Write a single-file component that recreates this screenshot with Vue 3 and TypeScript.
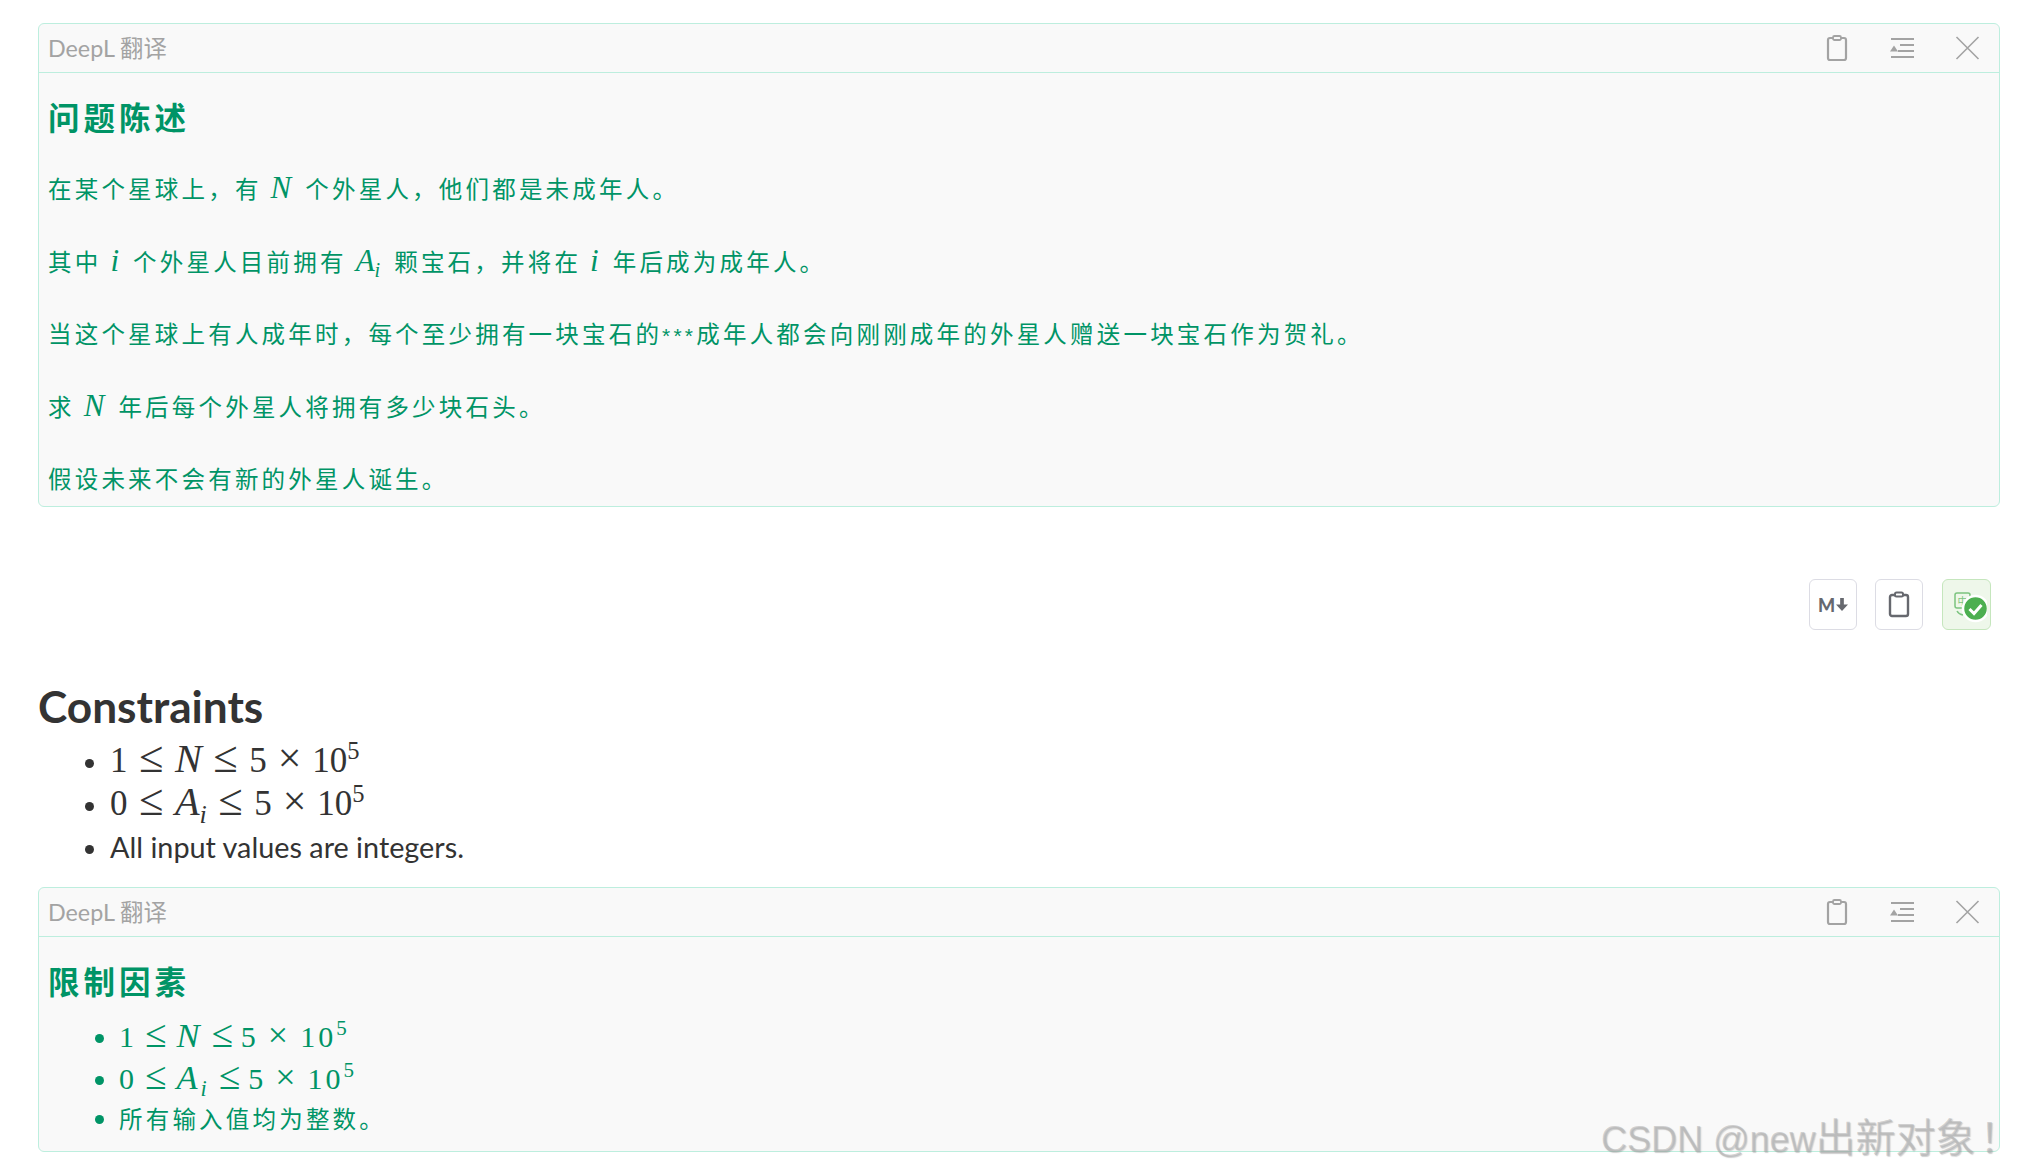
<script setup lang="ts">
type Seg = { k: 't' | 'm' | 'a' | 's'; v: string }
const t = (v: string): Seg => ({ k: 't', v })
const m = (v: string): Seg => ({ k: 'm', v })
const s = (v: string): Seg => ({ k: 's', v })
const a: Seg = { k: 'a', v: 'A' }
const paragraphs: Seg[][] = [
  [t('在某个星球上，有'), m('N'), t('个外星人，他们都是未成年人。')],
  [t('其中'), m('i'), t('个外星人目前拥有'), a, t('颗宝石，并将在'), m('i'), t('年后成为成年人。')],
  [t('当这个星球上有人成年时，每个至少拥有一块宝石的'), s('***'), t('成年人都会向刚刚成年的外星人赠送一块宝石作为贺礼。')],
  [t('求'), m('N'), t('年后每个外星人将拥有多少块石头。')],
  [t('假设未来不会有新的外星人诞生。')],
]
</script>

<template>
  <div class="page">
    <section class="card first">
      <header class="card-head">
        <span class="label">DeepL 翻译</span>
        <div class="tools">
          <svg class="tool" width="24" height="28" viewBox="0 0 24 28"><rect x="3" y="4" width="18" height="22" rx="2" fill="none" stroke="#a3a3a3" stroke-width="2.2"/><rect x="8" y="2" width="8" height="4" rx="1.5" fill="#f9f9f9" stroke="#a3a3a3" stroke-width="1.8"/></svg>
          <svg class="tool" width="26" height="22" viewBox="0 0 26 22"><path d="M2 2h23M11 8h14M9 14h16M2 20h23" stroke="#a3a3a3" stroke-width="2" fill="none"/><path d="M1 14.500h8L5 8.500z" fill="#a3a3a3"/></svg>
          <svg class="tool" width="25" height="24" viewBox="0 0 25 24"><path d="M1.5 1l22 22M23.5 1l-22 22" stroke="#a3a3a3" stroke-width="1.6" fill="none"/></svg>
        </div>
      </header>
      <div class="card-body">
        <h3 class="zh-title">问题陈述</h3>
        <p v-for="(segs, i) in paragraphs" :key="i" class="zh-p">
          <template v-for="(seg, j) in segs" :key="j">
            <span v-if="seg.k === 't'">{{ seg.v }}</span>
            <span v-else-if="seg.k === 's'" class="stars">{{ seg.v }}</span>
            <span v-else-if="seg.k === 'm'" class="mi inline">{{ seg.v }}</span>
            <span v-else class="mi inline">A<sub class="sb">i</sub></span>
          </template>
        </p>
      </div>
    </section>

    <div class="actions">
      <button class="btn"><span class="md">M</span><svg width="12" height="13" viewBox="0 0 13 14"><path d="M4.5 0h4v7H13l-6.500 7L0 7h4.500z" fill="#66686e"/></svg></button>
      <button class="btn">
        <svg width="22" height="27" viewBox="0 0 22 27"><rect x="2" y="4" width="18" height="21" rx="2" fill="none" stroke="#66686e" stroke-width="2.4"/><rect x="7" y="1.500" width="8" height="4" rx="1.500" fill="#fff" stroke="#66686e" stroke-width="2"/></svg>
      </button>
      <button class="btn ok">
        <svg width="40" height="36" viewBox="0 0 40 36">
          <rect x="8" y="6" width="15" height="15" rx="2" fill="none" stroke="#7cc47f" stroke-width="1.500"/>
          <text x="10.500" y="18" font-size="10" fill="#7cc47f" font-family="Noto Sans CJK SC">中</text>
          <path d="M10 24a8 8 0 0 0 6 4" fill="none" stroke="#7cc47f" stroke-width="1.500"/>
          <circle cx="28.500" cy="21.500" r="12.500" fill="#4caf50" stroke="#fff" stroke-width="2.500"/>
          <path d="M22.500 22l4.500 4.500 7.500-8.500" fill="none" stroke="#fff" stroke-width="3"/>
        </svg>
      </button>
    </div>

    <h2 class="en-title">Constraints</h2>
    <ul class="en-list">
      <li class="math-row">
        <span class="n">1</span><span class="rel">≤</span><span class="mi">N</span><span class="rel">≤</span><span class="n">5</span><span class="bin">×</span><span class="n">10<sup class="sp">5</sup></span>
      </li>
      <li class="math-row">
        <span class="n">0</span><span class="rel">≤</span><span class="mi">A<sub class="sb">i</sub></span><span class="rel">≤</span><span class="n">5</span><span class="bin">×</span><span class="n">10<sup class="sp">5</sup></span>
      </li>
      <li class="text-row">All input values are integers.</li>
    </ul>

    <section class="card">
      <header class="card-head">
        <span class="label">DeepL 翻译</span>
        <div class="tools">
          <svg class="tool" width="24" height="28" viewBox="0 0 24 28"><rect x="3" y="4" width="18" height="22" rx="2" fill="none" stroke="#a3a3a3" stroke-width="2.2"/><rect x="8" y="2" width="8" height="4" rx="1.5" fill="#f9f9f9" stroke="#a3a3a3" stroke-width="1.8"/></svg>
          <svg class="tool" width="26" height="22" viewBox="0 0 26 22"><path d="M2 2h23M11 8h14M9 14h16M2 20h23" stroke="#a3a3a3" stroke-width="2" fill="none"/><path d="M1 14.500h8L5 8.500z" fill="#a3a3a3"/></svg>
          <svg class="tool" width="25" height="24" viewBox="0 0 25 24"><path d="M1.5 1l22 22M23.5 1l-22 22" stroke="#a3a3a3" stroke-width="1.6" fill="none"/></svg>
        </div>
      </header>
      <div class="card-body second">
        <h3 class="zh-title">限制因素</h3>
        <ul class="zh-list">
          <li class="zh-math">
            <span class="n">1</span><span class="rel">≤</span><span class="mi">N</span><span class="rel">≤</span><span class="n">5</span><span class="bin">×</span><span class="n">10<sup class="sp">5</sup></span>
          </li>
          <li class="zh-math">
            <span class="n">0</span><span class="rel">≤</span><span class="mi">A<sub class="sb">i</sub></span><span class="rel">≤</span><span class="n">5</span><span class="bin">×</span><span class="n">10<sup class="sp">5</sup></span>
          </li>
          <li>所有输入值均为整数。</li>
        </ul>
      </div>
    </section>

    <div class="watermark">CSDN @new<span class="wm-zh">出新对象<span class="wm-bang">！</span></span></div>
  </div>
</template>

<style scoped>
.page {
  position: relative;
  width: 2020px;
  height: 1174px;
  box-sizing: border-box;
  padding: 23px 20px 0 38px;
  overflow: hidden;
  background: #fff;
  font-family: Lato, "Noto Sans CJK SC", sans-serif;
  color: #333;
}
.card {
  border: 1px solid #bdeede;
  border-radius: 6px;
  background: #f9f9f9;
}
.card-head {
  height: 49px;
  box-sizing: border-box;
  border-bottom: 1px solid #bdeede;
  display: flex;
  align-items: center;
  justify-content: space-between;
  padding: 0 19px 0 9px;
}
.label {
  font-size: 23.3px;
  line-height: 46px;
  color: #a3a3a3;
}
.tools {
  display: flex;
  align-items: center;
  gap: 40px;
}
.tool {
  display: block;
}
.card-body {
  padding: 23px 9px 10px;
  color: #009466;
  font-family: "Noto Sans CJK SC", sans-serif;
}
.card-body.second {
  padding-top: 23px;
  padding-bottom: 11px;
}
.zh-title {
  margin: 0;
  font-size: 31.5px;
  line-height: 40px;
  font-weight: 700;
  letter-spacing: 4px;
}
.zh-p {
  margin: 34px 0 0;
  font-size: 23.5px;
  line-height: 36px;
  letter-spacing: 3.2px;
  height: 36px;
  white-space: nowrap;
}
.zh-p + .zh-p {
  margin-top: 36.5px;
}
.stars {
  font-family: "Liberation Sans", sans-serif;
  font-size: 21px;
  letter-spacing: 3.2px;
}
.mi {
  font-family: "Liberation Serif", serif;
  font-style: italic;
}
.n,
.rel,
.bin {
  font-family: "Liberation Serif", serif;
}
.inline {
  font-size: 31px;
  margin: 0 14px 0 9px;
  letter-spacing: 0;
  line-height: 0;
}
.sb {
  font-size: 0.65em;
  vertical-align: -0.3em;
  line-height: 0;
}
.sp {
  font-size: 0.7em;
  vertical-align: 0.55em;
  line-height: 0;
}
.actions {
  display: flex;
  justify-content: flex-end;
  gap: 18px;
  padding-right: 9px;
  margin-top: 72px;
}
.btn {
  width: 48px;
  height: 51px;
  padding: 0;
  box-sizing: border-box;
  border: 1px solid #dcdce4;
  border-radius: 6px;
  background: #fff;
  display: flex;
  align-items: center;
  justify-content: center;
}
.btn.ok {
  width: 49px;
  margin-left: 1px;
  background: #eef7ea;
  border-color: #c5e6bd;
}
.md {
  font-family: Lato, sans-serif;
  font-weight: 900;
  font-size: 18px;
  color: #66686e;
  margin-right: 1px;
}
.en-title {
  margin: 51px 0 0;
  font-size: 44.2px;
  line-height: 50px;
  font-weight: 700;
  color: #333;
}
.en-list {
  margin: 8px 0 0;
  padding: 0 0 0 72px;
  font-size: 28px;
}
.math-row {
  height: 43px;
  line-height: 38px;
  font-size: 35px;
}
.rel {
  line-height: 0;
}
.math-row .rel {
  font-size: 1.27em;
  margin: 0 11.5px;
}
.math-row .bin {
  font-size: 1.2em;
  line-height: 0;
  margin: 0 11px;
}
.math-row .mi {
  font-size: 1.15em;
  line-height: 0;
}
.math-row::marker {
  font-size: 28px;
}
.text-row {
  height: 44px;
  line-height: 44px;
  font-size: 28.8px;
}
.en-list + .card {
  margin-top: 18px;
}
.zh-list {
  margin: 15px 0 0;
  padding: 0 0 0 71px;
  font-size: 23.5px;
  letter-spacing: 3.2px;
}
.zh-list li {
  height: 41.5px;
  line-height: 41.5px;
}
.zh-list .zh-math {
  font-size: 30px;
  letter-spacing: 3px;
  line-height: 39px;
}
.zh-math .rel {
  font-size: 1.3em;
  margin: 0 8px;
  letter-spacing: 0;
}
.zh-math .bin {
  font-size: 1.2em;
  line-height: 0;
  margin: 0 9px;
}
.zh-math .mi {
  font-size: 1.15em;
  line-height: 0;
  margin: 0 1px 0 2px;
}
.zh-math::marker,
.zh-list li::marker {
  font-size: 22px;
}
.watermark {
  position: absolute;
  left: 1601px;
  top: 1115px;
  font-family: "Liberation Sans", "Noto Sans CJK SC", sans-serif;
  font-size: 36px;
  line-height: 46px;
  white-space: nowrap;
  color: rgba(170, 170, 170, 0.5);
  text-shadow: 1px 1px 1px rgba(120, 120, 120, 0.35);
}
.wm-zh {
  font-size: 40px;
}
.wm-bang {
  margin-left: 4px;
}
</style>
